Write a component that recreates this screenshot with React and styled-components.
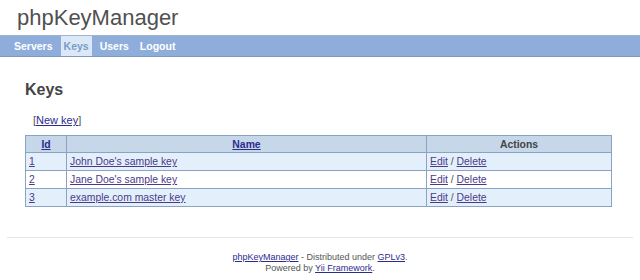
import React from 'react';
import styled, { createGlobalStyle } from 'styled-components';

const GlobalStyle = createGlobalStyle`
    html, body {
        margin: 0;
        padding: 0;
        background: #ffffff;
        font-family: "Liberation Sans", Arial, sans-serif;
        color: #555;
    }
`;

const keys = [
    { id: 1, name: "John Doe's sample key" },
    { id: 2, name: "Jane Doe's sample key" },
    { id: 3, name: 'example.com master key' },
];

function App() {
    return (
        <Page>
            <GlobalStyle />
            <Logo>phpKeyManager</Logo>
            <MainMenu>
                <MenuItem href="#">Servers</MenuItem>
                <MenuItem href="#" active>Keys</MenuItem>
                <MenuItem href="#">Users</MenuItem>
                <MenuItem href="#">Logout</MenuItem>
            </MainMenu>

            <Content>
                <Title>Keys</Title>
                <Toolbar>[<Link href="#">New key</Link>]</Toolbar>

                <Grid>
                    <thead>
                        <tr>
                            <Th $w={41}><HeadLink href="#">Id</HeadLink></Th>
                            <Th><HeadLink href="#">Name</HeadLink></Th>
                            <Th $w={185}>Actions</Th>
                        </tr>
                    </thead>
                    <tbody>
                        {keys.map((k, i) => (
                            <Row key={k.id} $odd={i % 2 === 0}>
                                <Td><Link href="#">{k.id}</Link></Td>
                                <Td><Link href="#">{k.name}</Link></Td>
                                <Td>
                                    <Link href="#" $visited>Edit</Link> / <Link href="#">Delete</Link>
                                </Td>
                            </Row>
                        ))}
                    </tbody>
                </Grid>
            </Content>

            <Footer>
                <Link href="#">phpKeyManager</Link> - Distributed under <Link href="#">GPLv3</Link>.
                <br />
                Powered by <Link href="#">Yii Framework</Link>.
            </Footer>
        </Page>
    )
}

export default App

const Page = styled.div`
    width: 640px;
    height: 280px;
    overflow: hidden;
`;

const Logo = styled.div`
    padding: 5px 0 0 17px;
    height: 31px;
    box-sizing: border-box;
    font-size: 22px;
    line-height: 26px;
    color: #505050;
`;

const MainMenu = styled.div`
    display: flex;
    align-items: stretch;
    gap: 5px;
    height: 20px;
    padding: 0 0 0 11px;
    margin-top: 4px;
    background: #8eaddb;
    border-top: 1px solid #a2b4c9;
    border-bottom: 1px solid #7f98b8;
`;

const MenuItem = styled.a`
    display: flex;
    align-items: center;
    padding: 0 3px;
    font-size: 10.5px;
    font-weight: bold;
    text-decoration: none;
    color: ${p => p.active ? '#7d9cc6' : '#ffffff'};
    background: ${p => p.active ? '#dbe8f8' : 'transparent'};
`;

const Content = styled.div`
    padding: 0 28px 0 25px;
`;

const Title = styled.h1`
    margin: 23px 0 0;
    font-size: 16px;
    line-height: 20px;
    font-weight: bold;
    color: #444;
`;

const Toolbar = styled.div`
    margin: 13px 0 0 8px;
    font-size: 11px;
    line-height: 14px;
    color: #555;
`;

const Link = styled.a`
    color: ${p => p.$visited ? '#6c3a80' : '#2c2c8e'};
    text-decoration: underline;
`;

const HeadLink = styled(Link)`
    font-weight: bold;
`;

const Grid = styled.table`
    margin-top: 8px;
    width: 100%;
    table-layout: fixed;
    border-collapse: collapse;
    font-size: 10.4px;
    border: 1px solid #8aa3c0;
`;

const Th = styled.th`
    box-sizing: border-box;
    width: ${p => p.$w ? `${p.$w}px` : 'auto'};
    height: 17px;
    padding: 0 3px;
    background: #c6d7ea;
    border: 1px solid #8aa3c0;
    color: #444;
    font-weight: bold;
    text-align: center;
`;

const Row = styled.tr`
    background: ${p => p.$odd ? '#e3f0fb' : '#ffffff'};
`;

const Td = styled.td`
    height: 17px;
    padding: 0 3px;
    border: 1px solid #8aa3c0;
    color: #555;

    & a {
        color: #4b3a8a;
    }
`;

const Footer = styled.div`
    margin: 30px 7px 0;
    padding-top: 14px;
    border-top: 1px solid #e6e6e6;
    text-align: center;
    font-size: 9px;
    line-height: 11px;
    color: #555;

    & a {
        color: #2c2c8e;
    }
`;
